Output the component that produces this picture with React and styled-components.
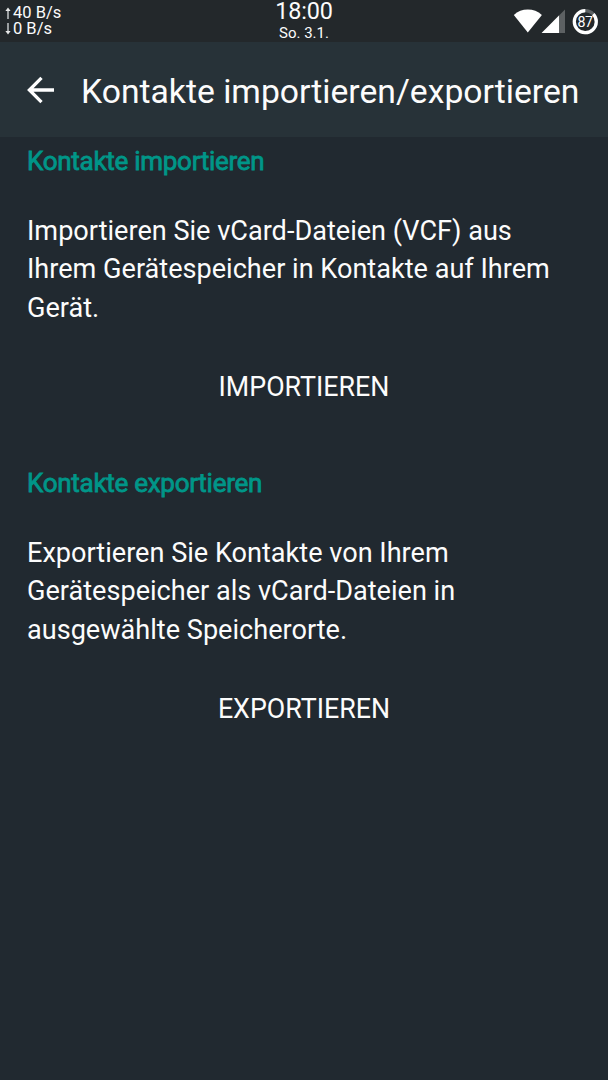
import React from "react";
import styled, { createGlobalStyle } from "styled-components";

const GlobalStyle = createGlobalStyle`
  * {
    box-sizing: border-box;
  }
  body {
    margin: 0;
    background-color: #212930;
    font-family: Roboto, sans-serif;
  }
`;

const Screen = styled.div`
  min-height: 1080px;
  display: flex;
  flex-direction: column;
  background-color: #212930;
  color: #fcfcfc;
`;

const StatusBar = styled.header`
  height: 42px;
  display: grid;
  grid-template-columns: 1fr auto 1fr;
  background-color: #23282b;
`;

const Network = styled.div`
  padding: 5px 0 0 4px;
  font-size: 16.5px;
  line-height: 16px;
`;

const Speed = styled.div`
  display: flex;
  align-items: center;
  gap: 1px;
`;

const Clock = styled.div`
  display: flex;
  flex-direction: column;
  align-items: center;
`;

const Time = styled.span`
  font-size: 23.4px;
  line-height: 23px;
  letter-spacing: -0.1px;
`;

const Day = styled.span`
  margin-top: 1px;
  font-size: 15px;
  line-height: 18px;
`;

const Icons = styled.div`
  display: flex;
  justify-content: flex-end;
  padding-right: 9px;
`;

const AppBar = styled.nav`
  height: 95px;
  display: flex;
  align-items: center;
  padding-left: 27px;
  background-color: #273238;
`;

const Back = styled.button`
  display: flex;
  width: 54px;
  padding: 0;
  border: none;
  background: none;
  color: inherit;
  cursor: pointer;
`;

const Title = styled.h1`
  margin: 5px 0 0;
  font-size: 33.7px;
  font-weight: 400;
  line-height: 40px;
  white-space: nowrap;
`;

const Content = styled.main`
  padding: 8px 27px 0;
`;

const Section = styled.section`
  height: 322px;
  display: flex;
  flex-direction: column;
`;

const Heading = styled.h2`
  margin: 0 0 34.5px;
  color: #009688;
  font-size: 26px;
  font-weight: 400;
  line-height: 32px;
  letter-spacing: -0.28px;
  -webkit-text-stroke: 0.8px #009688;
`;

const Description = styled.p`
  margin: 0 0 40px;
  font-size: 27.1px;
  line-height: 38.5px;
`;

const Action = styled.button`
  align-self: center;
  padding: 0;
  border: none;
  background: none;
  color: inherit;
  font-family: inherit;
  font-size: 26.8px;
  line-height: 40px;
  text-transform: uppercase;
  cursor: pointer;
`;

const SpeedArrow = ({ down }) => (
  <svg width="8" height="14" viewBox="0 0 8 14">
    <g transform={down ? "rotate(180 4 7)" : undefined}>
      <path d="M4 3v10" stroke="#a9acae" strokeWidth="1.8" />
      <path d="M1.4 5 4 1.6 6.6 5z" fill="#e6e7e7" />
    </g>
  </svg>
);

const StatusIcons = () => (
  <svg width="87" height="42" viewBox="512 0 87 42">
    <path d="M527.8 32.4 513.8 14.9Q519.8 9.6 527.8 9.6T541.9 14.9Z" fill="#fff" />
    <path d="M565 9.4V33H541.6Z" fill="#5d6163" />
    <path d="M559 15.4V33H541.6Z" fill="#fff" />
    <circle cx="585.3" cy="21.7" r="11" fill="none" stroke="#5d6163" strokeWidth="3.2" />
    <circle
      cx="585.3"
      cy="21.7"
      r="11"
      fill="none"
      stroke="#fff"
      strokeWidth="3.2"
      pathLength="100"
      strokeDasharray="87 13"
      transform="rotate(-43.2 585.3 21.7)"
    />
    <text x="584.9" y="27" fontSize="14.2" letterSpacing="-0.6" fill="#fff" textAnchor="middle">
      87
    </text>
  </svg>
);

const BackArrow = () => (
  <svg width="28" height="28" viewBox="0 0 28 28">
    <path d="M27 14H3M14.5 1.9 2.4 14l12.1 12.1" fill="none" stroke="#fff" strokeWidth="3.3" />
  </svg>
);

const sections = [
  {
    title: "Kontakte importieren",
    text: "Importieren Sie vCard-Dateien (VCF) aus Ihrem Gerätespeicher in Kontakte auf Ihrem Gerät.",
    action: "Importieren",
  },
  {
    title: "Kontakte exportieren",
    text: "Exportieren Sie Kontakte von Ihrem Gerätespeicher als vCard-Dateien in ausgewählte Speicherorte.",
    action: "Exportieren",
  },
];

const App = () => {
  return (
    <Screen>
      <GlobalStyle />
      <StatusBar>
        <Network>
          <Speed>
            <SpeedArrow />
            40 B/s
          </Speed>
          <Speed>
            <SpeedArrow down />0 B/s
          </Speed>
        </Network>
        <Clock>
          <Time>18:00</Time>
          <Day>So. 3.1.</Day>
        </Clock>
        <Icons>
          <StatusIcons />
        </Icons>
      </StatusBar>
      <AppBar>
        <Back aria-label="Zurück">
          <BackArrow />
        </Back>
        <Title>Kontakte importieren/exportieren</Title>
      </AppBar>
      <Content>
        {sections.map((section) => (
          <Section key={section.title}>
            <Heading>{section.title}</Heading>
            <Description>{section.text}</Description>
            <Action>{section.action}</Action>
          </Section>
        ))}
      </Content>
    </Screen>
  );
};

export default App;
